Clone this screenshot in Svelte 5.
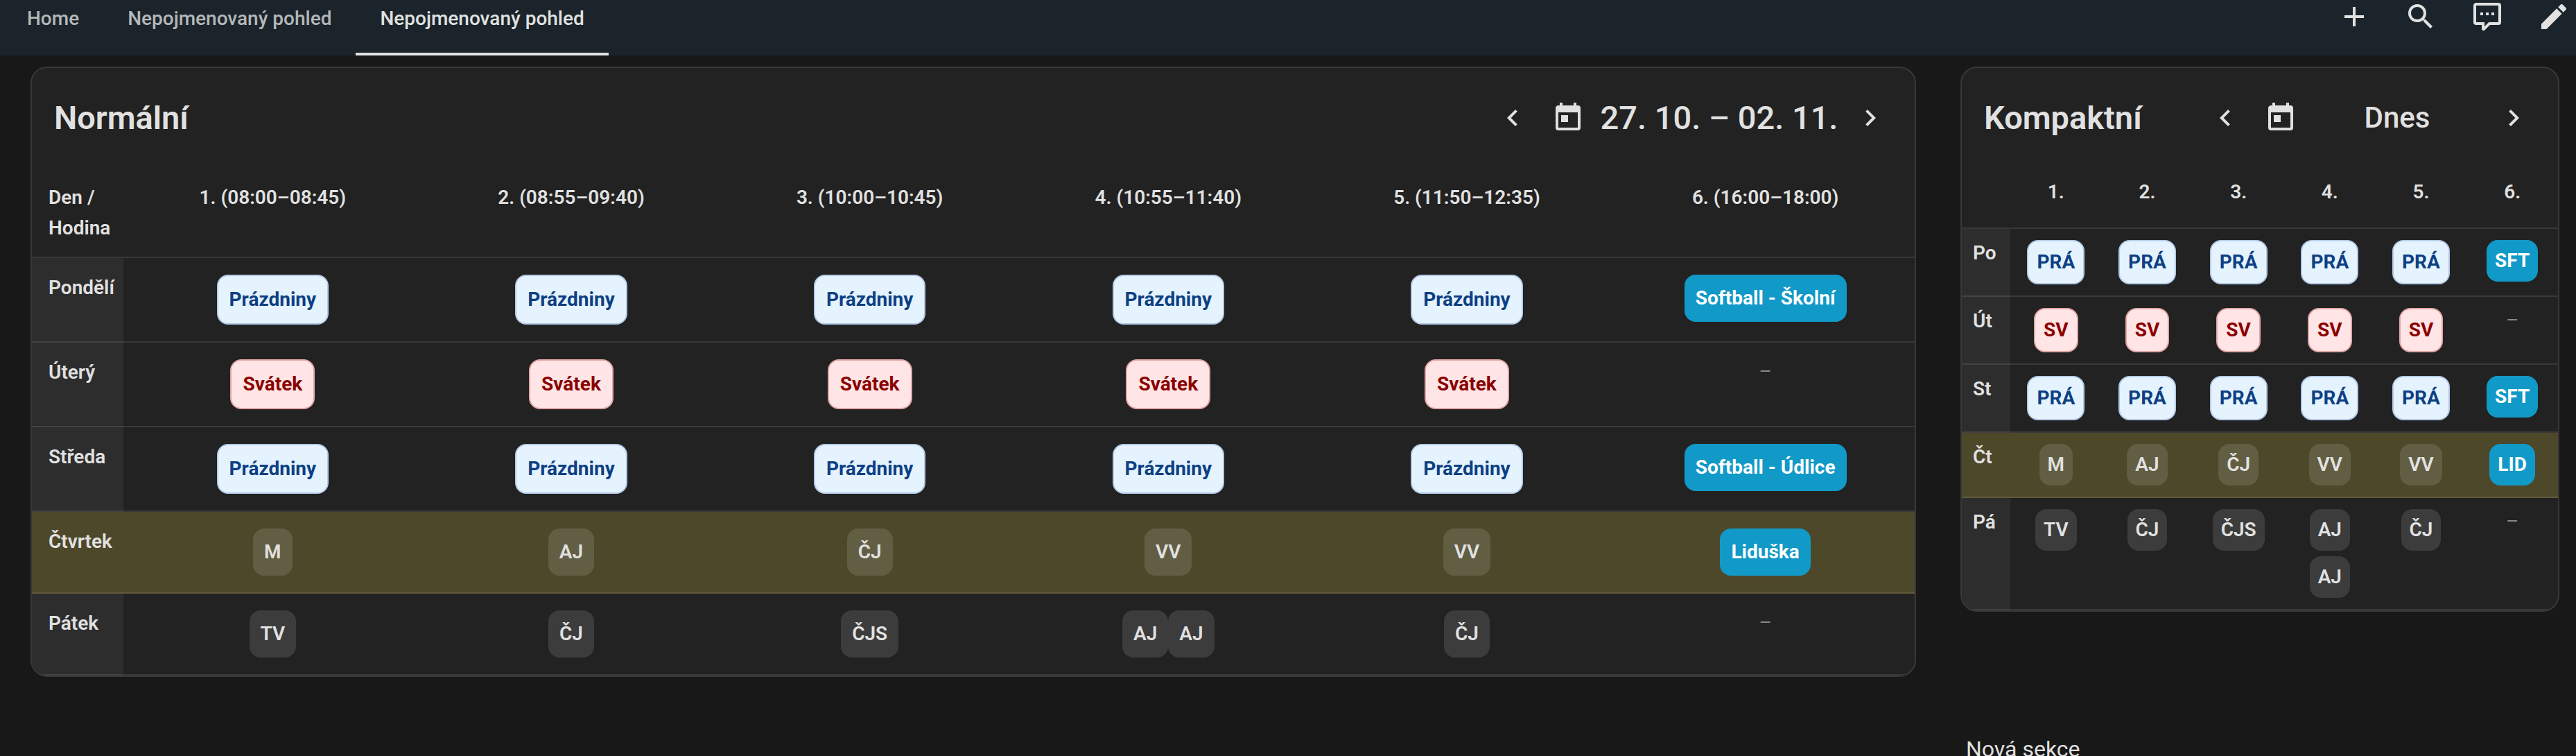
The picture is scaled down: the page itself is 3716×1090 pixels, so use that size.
<script>
  const repeat = (kind, label, count) =>
    Array.from({ length: count }, () => [{ kind, label }]);
  const lessons = (...labels) =>
    labels.map((entry) => [entry].flat().map((label) => ({ kind: 'lesson', label })));
  const event = (label) => [[{ kind: 'event', label }]];

  const tabs = [
    { label: 'Home', active: false },
    { label: 'Nepojmenovaný pohled', active: false },
    { label: 'Nepojmenovaný pohled', active: true },
  ];

  const actions = [
    { label: 'Přidat', path: 'M19,13H13V19H11V13H5V11H11V5H13V11H19V13Z' },
    {
      label: 'Hledat',
      path: 'M9.5,3A6.5,6.5 0 0,1 16,9.5C16,11.11 15.41,12.59 14.44,13.73L14.71,14H15.5L20.5,19L19,20.5L14,15.5V14.71L13.73,14.44C12.59,15.41 11.11,16 9.5,16A6.5,6.5 0 0,1 3,9.5A6.5,6.5 0 0,1 9.5,3M9.5,5C7,5 5,7 5,9.5C5,12 7,14 9.5,14C12,14 14,12 14,9.5C14,7 12,5 9.5,5Z',
    },
    {
      label: 'Asistent',
      path: 'M9,22A1,1 0 0,1 8,21V18H4A2,2 0 0,1 2,16V4C2,2.89 2.9,2 4,2H20A2,2 0 0,1 22,4V16A2,2 0 0,1 20,18H13.9L10.2,21.71C10,21.9 9.75,22 9.5,22V22H9M10,16V19.08L13.08,16H20V4H4V16H10M17,11H15V9H17V11M13,11H11V9H13V11M9,11H7V9H9V11Z',
    },
    {
      label: 'Upravit',
      path: 'M20.71,7.04C21.1,6.65 21.1,6 20.71,5.63L18.37,3.29C18,2.9 17.35,2.9 16.96,3.29L15.12,5.12L18.87,8.87M3,17.25V21H6.75L17.81,9.93L14.06,6.18L3,17.25Z',
    },
  ];

  const chevronLeft = 'M15.41,16.58L10.83,12L15.41,7.41L14,6L8,12L14,18L15.41,16.58Z';
  const chevronRight = 'M8.59,16.58L13.17,12L8.59,7.41L10,6L16,12L10,18L8.59,16.58Z';
  const calendar =
    'M7,10H12V15H7M19,19H5V8H19M19,3H18V1H16V3H8V1H6V3H5C3.89,3 3,3.9 3,5V19A2,2 0 0,0 5,21H19A2,2 0 0,0 21,19V5A2,2 0 0,0 19,3Z';

  const cards = [
    {
      title: 'Normální',
      period: '27. 10. – 02. 11.',
      compact: false,
      corner: 'Den / Hodina',
      hours: [
        '1. (08:00–08:45)',
        '2. (08:55–09:40)',
        '3. (10:00–10:45)',
        '4. (10:55–11:40)',
        '5. (11:50–12:35)',
        '6. (16:00–18:00)',
      ],
      days: [
        { name: 'Pondělí', cells: [...repeat('holiday', 'Prázdniny', 5), ...event('Softball - Školní')] },
        { name: 'Úterý', cells: [...repeat('feast', 'Svátek', 5), []] },
        { name: 'Středa', cells: [...repeat('holiday', 'Prázdniny', 5), ...event('Softball - Údlice')] },
        { name: 'Čtvrtek', today: true, cells: [...lessons('M', 'AJ', 'ČJ', 'VV', 'VV'), ...event('Liduška')] },
        { name: 'Pátek', cells: [...lessons('TV', 'ČJ', 'ČJS', ['AJ', 'AJ'], 'ČJ'), []] },
      ],
    },
    {
      title: 'Kompaktní',
      period: 'Dnes',
      compact: true,
      corner: '',
      hours: ['1.', '2.', '3.', '4.', '5.', '6.'],
      days: [
        { name: 'Po', cells: [...repeat('holiday', 'PRÁ', 5), ...event('SFT')] },
        { name: 'Út', cells: [...repeat('feast', 'SV', 5), []] },
        { name: 'St', cells: [...repeat('holiday', 'PRÁ', 5), ...event('SFT')] },
        { name: 'Čt', today: true, cells: [...lessons('M', 'AJ', 'ČJ', 'VV', 'VV'), ...event('LID')] },
        { name: 'Pá', cells: [...lessons('TV', 'ČJ', 'ČJS', ['AJ', 'AJ'], 'ČJ'), []] },
      ],
    },
  ];
</script>

{#snippet icon(path)}
  <svg class="icon" viewBox="0 0 24 24" aria-hidden="true"><path d={path} /></svg>
{/snippet}

<header class="toolbar">
  <nav class="tabs">
    {#each tabs as tab}
      <a href="#view" class="tab" class:active={tab.active}>{tab.label}</a>
    {/each}
  </nav>
  <div class="actions">
    {#each actions as action}
      <button class="icon-button" aria-label={action.label}>{@render icon(action.path)}</button>
    {/each}
  </div>
</header>

<main class="board">
  {#each cards as card}
    <section class="card" class:compact={card.compact}>
      <div class="card-header">
        <h2>{card.title}</h2>
        <div class="pager">
          <button class="icon-button" aria-label="Předchozí týden">{@render icon(chevronLeft)}</button>
          <button class="period">
            {@render icon(calendar)}
            <span class="period-label">{card.period}</span>
          </button>
          <button class="icon-button" aria-label="Další týden">{@render icon(chevronRight)}</button>
        </div>
      </div>
      <table>
        <thead>
          <tr>
            <th class="day" scope="col">{card.corner}</th>
            {#each card.hours as hour}
              <th scope="col">{hour}</th>
            {/each}
          </tr>
        </thead>
        <tbody>
          {#each card.days as day}
            <tr class:today={day.today}>
              <th class="day" scope="row">{day.name}</th>
              {#each day.cells as cell}
                <td>
                  <div class="slot">
                    {#each cell as entry}
                      <span class="chip {entry.kind}">{entry.label}</span>
                    {:else}
                      <span class="empty">–</span>
                    {/each}
                  </div>
                </td>
              {/each}
            </tr>
          {/each}
        </tbody>
      </table>
    </section>
  {/each}
  <h3 class="section-title">Nová sekce</h3>
</main>

<style>
  :global(html) {
    scrollbar-width: none;
    background: #181818;
  }

  :global(body) {
    color: #e1e1e1;
    font: 400 28px/44px Roboto, "Noto Sans", sans-serif;
  }

  button {
    padding: 0;
    border: 0;
    background: none;
    color: inherit;
    font: inherit;
    cursor: pointer;
  }

  h2,
  h3 {
    margin: 0;
    font-weight: 400;
  }

  .icon {
    display: block;
    flex: none;
    width: 48px;
    height: 48px;
    fill: currentColor;
  }

  .icon-button {
    flex: none;
  }

  .toolbar {
    display: flex;
    justify-content: space-between;
    align-items: flex-start;
    height: 80px;
    padding: 0 8px 0 4px;
    background: #1a242a;
  }

  .tabs {
    display: flex;
    height: 100%;
  }

  .tab {
    box-sizing: border-box;
    padding: 5px 35px 0;
    border-bottom: 4px solid transparent;
    color: #b5b7b9;
    font-weight: 500;
    text-decoration: none;
  }

  .tab.active {
    border-color: #e1e1e1;
    color: #e1e1e1;
  }

  .actions {
    display: flex;
    gap: 48px;
  }

  .board {
    display: grid;
    grid-template-columns: 2720fr 864fr;
    align-items: start;
    gap: 80px 64px;
    padding: 16px 24px 0 44px;
  }

  .card {
    min-width: 0;
    overflow: hidden;
    border: 2px solid #383838;
    border-radius: 24px;
    background: #222;
  }

  .card-header {
    display: flex;
    justify-content: space-between;
    align-items: center;
    height: 144px;
    padding: 0 40px 0 32px;
  }

  h2 {
    font-size: 47px;
    font-weight: 600;
    line-height: 64px;
  }

  .pager,
  .period {
    display: flex;
    align-items: center;
  }

  .period {
    margin-left: 32px;
  }

  .period-label {
    min-width: 388px;
    font-size: 47px;
    font-weight: 500;
    line-height: 64px;
    white-space: nowrap;
  }

  .compact .period-label {
    min-width: 288px;
    font-size: 42px;
  }

  table {
    width: 100%;
    border-spacing: 0;
    table-layout: fixed;
  }

  th,
  td {
    padding: 20px 8px;
    border-bottom: 2px solid rgba(255, 255, 255, 0.1);
    text-align: center;
    vertical-align: top;
  }

  th {
    padding: 21px 8px 19px;
    font-weight: 600;
  }

  .day {
    box-sizing: border-box;
    width: 132px;
    padding-left: 24px;
    text-align: left;
  }

  tbody .day {
    background: #2d2d2d;
  }

  .today {
    background: #4d4829;
  }

  tbody .today .day {
    background: none;
  }

  .slot {
    display: flex;
    flex-wrap: wrap;
    justify-content: center;
    align-items: flex-start;
  }

  .chip {
    margin: 4px 0;
    padding: 12px 16px;
    border-radius: 16px;
    font-weight: 600;
  }

  .lesson {
    background: rgba(255, 255, 255, 0.12);
  }

  .holiday {
    border: 2px solid #b3cae6;
    background: #e5f3ff;
    color: #0d4083;
    font-weight: 700;
  }

  .feast {
    border: 2px solid #e3a6a6;
    background: #ffe5e5;
    color: #8b0000;
    font-weight: 700;
  }

  .event {
    background: #1199c7;
    color: #fff;
    font-weight: 700;
  }

  .empty {
    color: #888;
  }

  .compact td {
    padding: 12px 4px;
  }

  .compact th {
    padding: 13px 4px 11px;
  }

  .compact thead th {
    padding-bottom: 29px;
  }

  .compact .day {
    width: 70px;
    padding-left: 16px;
  }

  .compact .slot {
    flex-direction: column;
    align-items: center;
  }

  .compact .chip {
    padding: 8px 12px;
  }

  .section-title {
    grid-column: 2;
    padding-left: 8px;
    font-size: 32px;
    line-height: 48px;
  }
</style>
